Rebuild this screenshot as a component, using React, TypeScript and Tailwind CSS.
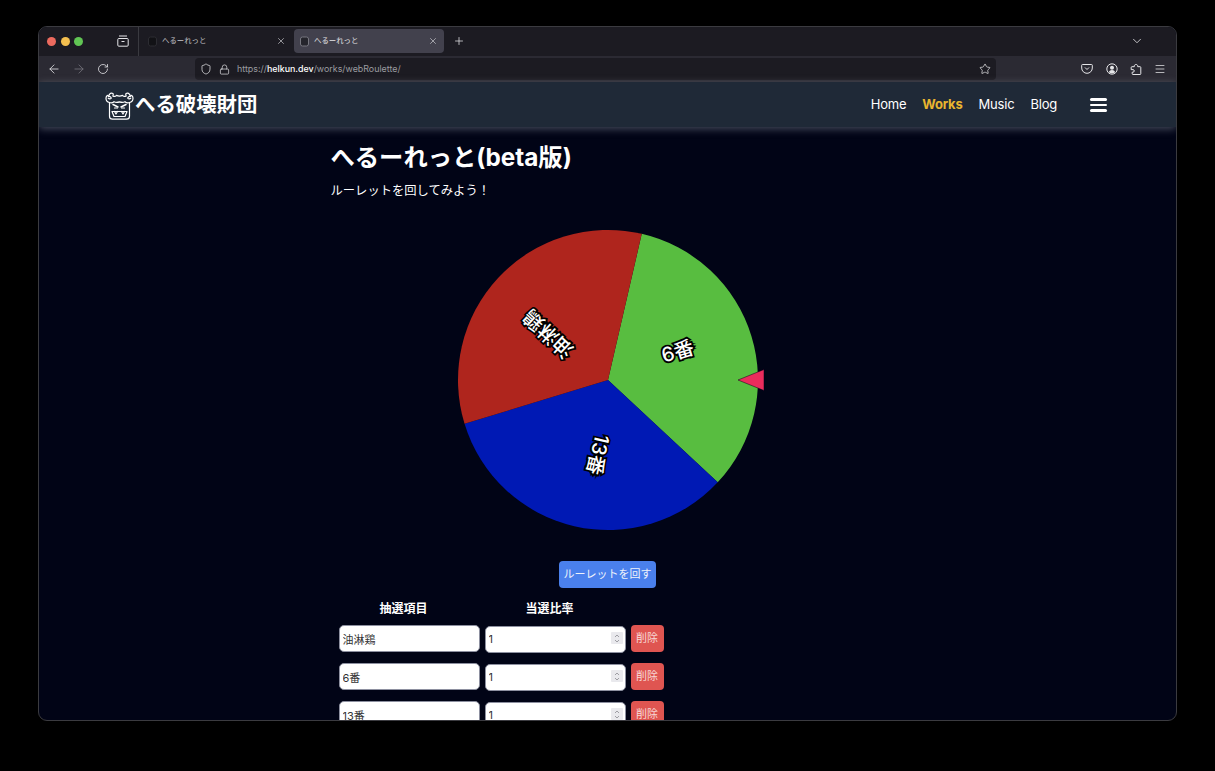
import { ArrowLeft, ArrowRight, ChevronDown, Lock, Menu, Plus, RotateCw, Shield, Star, X } from "lucide-react";

const FONT = "font-['Inter','Noto_Sans_CJK_JP',sans-serif]";
const rows = ["油淋鶏", "6番", "13番"];

const toXY = (deg: number, r: number) => {
  const rad = (deg * Math.PI) / 180;
  return `${150 + r * Math.cos(rad)} ${150 + r * Math.sin(rad)}`;
};

const slices = [
  { label: "6番", from: -77, to: 43, fill: "#58bd40" },
  { label: "13番", from: 43, to: 163, fill: "#0019b4" },
  { label: "油淋鶏", from: 163, to: 283, fill: "#af251d" },
];

function OniLogo() {
  return (
    <svg width="29" height="30" viewBox="0 0 29 30" fill="none" stroke="white" strokeWidth="1.2" strokeLinejoin="round" strokeLinecap="round">
      <path d="M4.500 12.500c-2.300-.6-3.500-2.200-3.500-4 0-2 1.500-3.300 3.200-3.300.3-1.800 2-2.600 3.800-1.700.4.800.3 1.700-.2 2.500 1.500.8 2.700.5 3.700-.6 1.800.9 4.200.9 6 0 1 1.100 2.200 1.400 3.700.6-.5-.8-.6-1.700-.2-2.500 1.800-.9 3.500-.1 3.800 1.700 1.700 0 3.200 1.300 3.200 3.300 0 1.800-1.200 3.400-3.500 4" />
      <path d="M3.500 6.500c1.300-.4 2.500.4 2.800 1.700-.9.900-2.300.9-3.100 0" />
      <path d="M25.500 6.500c-1.300-.4-2.500.4-2.800 1.700.9.900 2.300.9 3.100 0" />
      <path d="M4.500 12.500v13.700a3 3 0 0 0 3 3h14a3 3 0 0 0 3-3v-13.700c-1.800.6-3.500.1-4.500-.8-1.500.9-3.500.9-5.500.2-2 .7-4 .7-5.500-.2-1 .9-2.700 1.400-4.500.8z" />
      <path d="M8 14.500l5 2.500M21 14.500l-5 2.500" strokeWidth="1.500" />
      <path d="M9.500 18h3M16.500 18h3" />
      <path d="M7 21.500h15l-2 5h-11z" />
      <path d="M9.500 21.500l1.500 2.500 1.500-2.500M16.500 21.500l1.500 2.500 1.500-2.500" />
    </svg>
  );
}

function Tab({ active }: { active?: boolean }) {
  return (
    <div className={`flex h-[24px] w-[150px] items-center rounded-[4px] px-[6px] ${active ? "bg-[#42414d] text-[#e5e5e8]" : "text-[#c4c4c8]"}`}>
      <svg width="9" height="11" viewBox="0 0 9 11" className="shrink-0">
        <rect x="0.500" y="1" width="8" height="9" rx="2" fill={active ? "#25252c" : "#121216"} stroke={active ? "#77777f" : "#2c2c32"} />
      </svg>
      <span className="ml-[5px] flex-1 text-[7.400px] leading-none">へるーれっと</span>
      <X size={10} strokeWidth={1.6} className="text-[#d0d0d4]" />
    </div>
  );
}

function Roulette() {
  return (
    <svg width="310" height="300" viewBox="0 0 310 300" className="ml-[10px] block overflow-visible">
      {slices.map((s) => (
        <path key={s.label} d={`M150 150L${toXY(s.from, 150)}A150 150 0 0 1 ${toXY(s.to, 150)}Z`} fill={s.fill} />
      ))}
      {slices.map((s) => {
        const mid = (s.from + s.to) / 2;
        const rad = (mid * Math.PI) / 180;
        const x = 150 + 75 * Math.cos(rad);
        const y = 150 + 75 * Math.sin(rad);
        return (
          <text
            key={s.label}
            x={x}
            y={y}
            transform={`rotate(${mid} ${x} ${y})`}
            textAnchor="middle"
            fill="white"
            stroke="black"
            strokeWidth="3.500"
            strokeMiterlimit="10"
            paintOrder="stroke"
            fontSize="20"
            fontWeight="500"
            className="font-['Inter','Noto_Sans_CJK_JP',sans-serif]"
          >
            {s.label}
          </text>
        );
      })}
      <path d="M280 150L306 139.500V160.500Z" fill="#ea2c5c" stroke="#01021a" strokeWidth="0.5" />
    </svg>
  );
}

function EntryRow({ name }: { name: string }) {
  return (
    <div className="flex h-[27px] shrink-0 gap-[5px]">
      <input
        defaultValue={name}
        className="h-[27px] w-[141px] rounded-[5px] border border-[#8d90a0] bg-white px-[3px] text-[11px] text-[#333] outline-none"
      />
      <div className="relative h-[27px] w-[141px]">
        <input
          defaultValue="1"
          className="h-full w-full rounded-[5px] border border-[#8d90a0] bg-white px-[3px] text-[11px] text-[#333] outline-none"
        />
        <span className="absolute right-[3px] top-[7px] flex h-[12px] w-[12px] flex-col items-center justify-center rounded-[1px] bg-[#e9e9ed]">
          <svg width="6" height="9" viewBox="0 0 6 9" fill="none" stroke="#8a8a90" strokeWidth="0.8">
            <path d="M1 3l2-2 2 2M1 6l2 2 2-2" />
          </svg>
        </span>
      </div>
      <button className="h-[27px] w-[33px] rounded-[4px] bg-[#df5551] text-[11px] text-[#f7d9d8]">削除</button>
    </div>
  );
}

export default function App() {
  return (
    <div className={`h-[771px] w-full overflow-hidden bg-black pt-[26px] ${FONT}`}>
      <div className="mx-[38px] flex h-[695px] flex-col overflow-hidden rounded-[9px] border border-[#3b3b40] bg-[#010416]">
        {/* tab strip */}
        <div className="flex h-[29px] shrink-0 items-center bg-[#1c1b22] pb-[1px] pl-[8px] pr-[32px]">
          <span className="h-[9px] w-[9px] rounded-full bg-[#ec6a5e]" />
          <span className="ml-[4.500px] h-[9px] w-[9px] rounded-full bg-[#f4bf4f]" />
          <span className="ml-[4.500px] h-[9px] w-[9px] rounded-full bg-[#61c554]" />
          <svg width="12" height="12" viewBox="0 0 12 12" fill="none" stroke="#e5e5e8" strokeWidth="1" className="ml-[34px]">
            <rect x="0.800" y="3.500" width="10.400" height="7.700" rx="1" />
            <path d="M2 1h8M4.500 6.500h3" />
          </svg>
          <div className="ml-[9px] mr-[3px] h-[29px] w-px bg-[#3a3a40]" />
          <Tab />
          <div className="ml-[2px]"><Tab active /></div>
          <Plus size={12} strokeWidth={1.5} className="ml-[9px] text-[#e5e5e8]" />
          <ChevronDown size={14} strokeWidth={1.4} className="ml-auto text-[#e5e5e8]" />
        </div>

        {/* toolbar */}
        <div className="flex h-[26px] shrink-0 items-center bg-[#2b2a33] pl-[8px] pr-[10px] text-[#e5e5e8]">
          <ArrowLeft size={14} strokeWidth={1.4} />
          <ArrowRight size={14} strokeWidth={1.4} className="ml-[11px] text-[#77767e]" />
          <RotateCw size={12} strokeWidth={1.6} className="ml-[11px]" />
          <div className="ml-[86px] flex h-[22px] w-[801px] items-center rounded-[4px] bg-[#1c1b22] pl-[5px] pr-[5px]">
            <Shield size={12} strokeWidth={1.5} />
            <Lock size={11} strokeWidth={1.5} className="ml-[7px]" />
            <span className="ml-[7px] text-[8.900px] leading-none text-[#9b9ba0]">
              https://<span className="font-medium text-white">helkun.dev</span>/works/webRoulette/
            </span>
            <Star size={12} strokeWidth={1.5} className="ml-auto" />
          </div>
          <svg width="12" height="12" viewBox="0 0 12 12" fill="none" stroke="#e5e5e8" strokeWidth="1" className="ml-[85px]">
            <path d="M1.500 1.500h9a.8.8 0 0 1 .8.8V5a5.300 5.300 0 0 1-10.600 0V2.300a.8.8 0 0 1 .8-.8z" />
            <path d="M4 4.500l2 2 2-2" />
          </svg>
          <svg width="12" height="12" viewBox="0 0 12 12" className="ml-[13px]">
            <circle cx="6" cy="6" r="5.200" fill="none" stroke="#e5e5e8" />
            <circle cx="6" cy="4.800" r="2" fill="#e5e5e8" />
            <path d="M2.800 9.300c.6-1.600 1.800-2.300 3.200-2.300s2.600.7 3.200 2.300c-1.800 1.500-4.600 1.500-6.400 0z" fill="#e5e5e8" />
          </svg>
          <svg width="12" height="12" viewBox="0 0 12 12" fill="none" stroke="#e5e5e8" strokeWidth="1" strokeLinejoin="round" className="ml-[12px]">
            <path d="M6 1.500c1 0 1.700.6 1.700 1.500v.7h2.300a.8.8 0 0 1 .8.8v6.200a.8.8 0 0 1-.8.8H3a.8.8 0 0 1-.8-.8V9.200h.8c.8 0 1.300-.6 1.300-1.300S3.800 6.600 3 6.600H1.200V4.500a.8.8 0 0 1 .8-.8h2.300V3c0-.9.700-1.500 1.700-1.500z" />
          </svg>
          <Menu size={12} strokeWidth={1.5} className="ml-[12px]" />
        </div>

        {/* site nav */}
        <div className="flex h-[45px] shrink-0 items-center bg-[#1f2937] pl-[66px] pr-[69px] pt-[1px] shadow-[0_2px_8px_rgba(200,205,220,0.35)]">
          <OniLogo />
          <span className="ml-[1px] text-[20.400px] font-bold text-white">へる破壊財団</span>
          <nav className="ml-auto flex items-center text-[13px] tracking-[-0.2px] text-white">
            <span>Home</span>
            <span className="ml-[16px] font-bold text-[#e9b52f]">Works</span>
            <span className="ml-[16px]">Music</span>
            <span className="ml-[16px]">Blog</span>
            <span className="ml-[33px] flex w-[17px] flex-col gap-[3px]">
              <span className="h-[2.500px] rounded-full bg-white" />
              <span className="h-[2.500px] rounded-full bg-white" />
              <span className="h-[2.500px] rounded-full bg-white" />
            </span>
          </nav>
        </div>

        {/* page */}
        <main className="mx-auto min-h-0 w-[554px] flex-1 pt-[14px] text-white">
          <h1 className="text-[24.300px] font-bold leading-[32px]">へるーれっと(beta版)</h1>
          <p className="mt-[10px] text-[12.300px] leading-[16px]">ルーレットを回してみよう！</p>
          <div className="mt-[31px] flex justify-center">
            <Roulette />
          </div>
          <div className="mt-[31px] flex justify-center">
            <button className="h-[27px] w-[97px] rounded-[4px] bg-[#4a80ec] text-[11px] text-[#eef2fb]">ルーレットを回す</button>
          </div>
          <div className="ml-[8px] mt-[13px] flex h-[16px] text-[12px] font-bold leading-[16px]">
            <span className="w-[130px] text-center">抽選項目</span>
            <span className="ml-[16px] w-[130px] text-center">当選比率</span>
          </div>
          <div className="ml-[8px] mt-[8px] flex flex-col gap-[11px]">
            {rows.map((name) => (
              <EntryRow key={name} name={name} />
            ))}
          </div>
        </main>
      </div>
    </div>
  );
}
